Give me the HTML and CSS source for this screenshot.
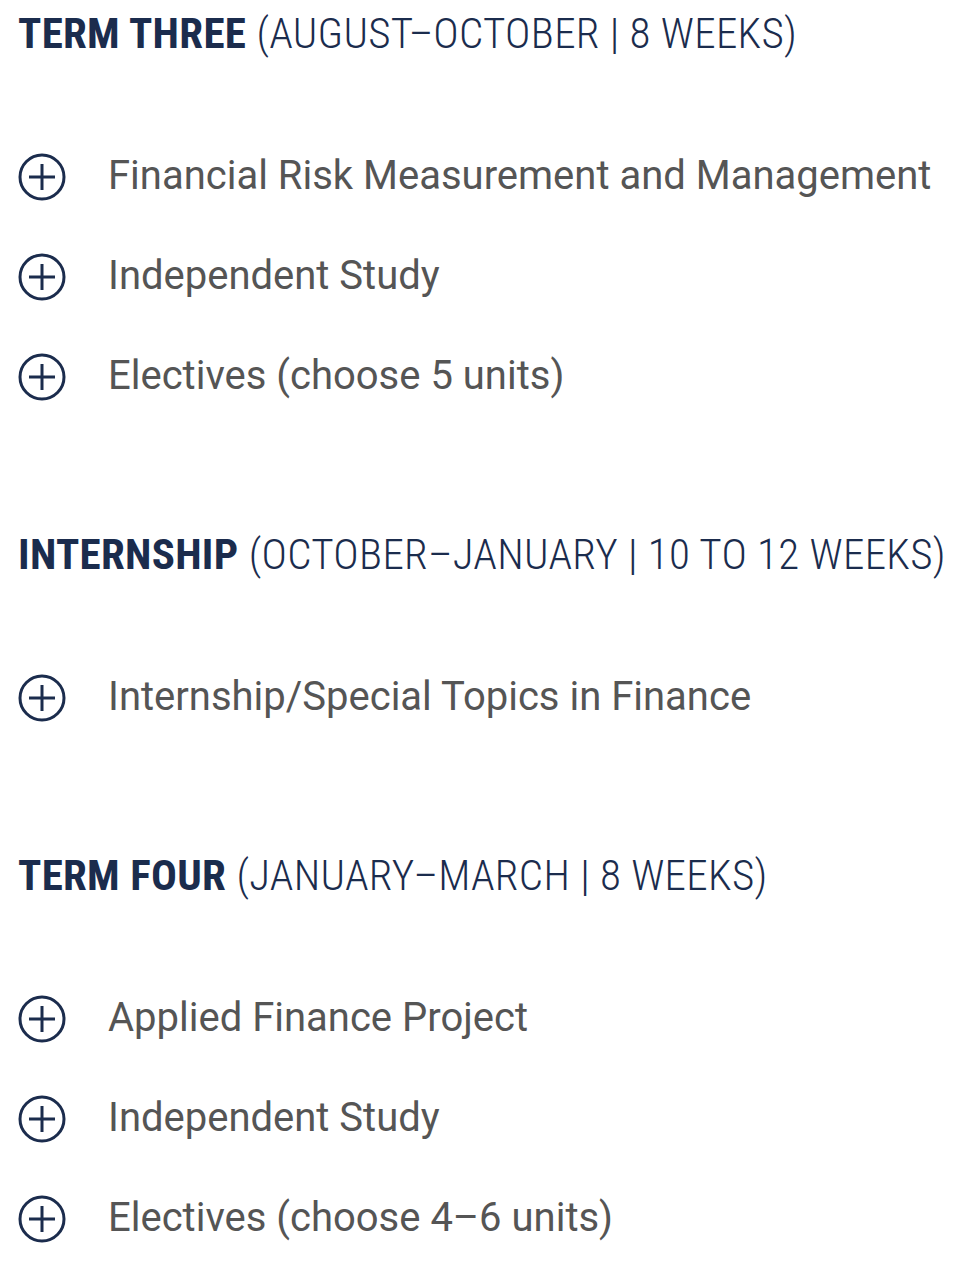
FILE: index.html
```html
<!DOCTYPE html>
<html lang="en">
<head>
<meta charset="utf-8">
<title>Curriculum</title>
<link rel="stylesheet" href="styles.css">
</head>
<body>
<main class="curriculum">
  <section class="term">
    <h2 class="term-title"><strong>TERM THREE</strong> <span class="term-dates">(AUGUST–OCTOBER | 8 WEEKS)</span></h2>
    <ul class="courses">
      <li class="course"><span class="plus"><svg viewBox="0 0 48 48" width="48" height="48"><circle cx="24" cy="24" r="22" fill="none" stroke="#1b2c4d" stroke-width="3"/><path d="M11 24h26M24 11v26" stroke="#1b2c4d" stroke-width="3" fill="none"/></svg></span><span class="course-name">Financial Risk Measurement and Management</span></li>
      <li class="course"><span class="plus"><svg viewBox="0 0 48 48" width="48" height="48"><circle cx="24" cy="24" r="22" fill="none" stroke="#1b2c4d" stroke-width="3"/><path d="M11 24h26M24 11v26" stroke="#1b2c4d" stroke-width="3" fill="none"/></svg></span><span class="course-name">Independent Study</span></li>
      <li class="course"><span class="plus"><svg viewBox="0 0 48 48" width="48" height="48"><circle cx="24" cy="24" r="22" fill="none" stroke="#1b2c4d" stroke-width="3"/><path d="M11 24h26M24 11v26" stroke="#1b2c4d" stroke-width="3" fill="none"/></svg></span><span class="course-name">Electives (choose 5 units)</span></li>
    </ul>
  </section>
  <section class="term">
    <h2 class="term-title"><strong>INTERNSHIP</strong> <span class="term-dates">(OCTOBER–JANUARY | 10 TO 12 WEEKS)</span></h2>
    <ul class="courses">
      <li class="course"><span class="plus"><svg viewBox="0 0 48 48" width="48" height="48"><circle cx="24" cy="24" r="22" fill="none" stroke="#1b2c4d" stroke-width="3"/><path d="M11 24h26M24 11v26" stroke="#1b2c4d" stroke-width="3" fill="none"/></svg></span><span class="course-name">Internship/Special Topics in Finance</span></li>
    </ul>
  </section>
  <section class="term">
    <h2 class="term-title"><strong>TERM FOUR</strong> <span class="term-dates">(JANUARY–MARCH | 8 WEEKS)</span></h2>
    <ul class="courses">
      <li class="course"><span class="plus"><svg viewBox="0 0 48 48" width="48" height="48"><circle cx="24" cy="24" r="22" fill="none" stroke="#1b2c4d" stroke-width="3"/><path d="M11 24h26M24 11v26" stroke="#1b2c4d" stroke-width="3" fill="none"/></svg></span><span class="course-name">Applied Finance Project</span></li>
      <li class="course"><span class="plus"><svg viewBox="0 0 48 48" width="48" height="48"><circle cx="24" cy="24" r="22" fill="none" stroke="#1b2c4d" stroke-width="3"/><path d="M11 24h26M24 11v26" stroke="#1b2c4d" stroke-width="3" fill="none"/></svg></span><span class="course-name">Independent Study</span></li>
      <li class="course"><span class="plus"><svg viewBox="0 0 48 48" width="48" height="48"><circle cx="24" cy="24" r="22" fill="none" stroke="#1b2c4d" stroke-width="3"/><path d="M11 24h26M24 11v26" stroke="#1b2c4d" stroke-width="3" fill="none"/></svg></span><span class="course-name">Electives (choose 4–6 units)</span></li>
    </ul>
  </section>
</main>
</body>
</html>
```
FILE: styles.css
```css
html, body {
  margin: 0;
  padding: 0;
  background: #ffffff;
}
.curriculum {
  padding: 0 0 0 18px;
  display: flex;
  flex-direction: column;
  gap: 96px;
}
.term-title {
  margin: 0;
  height: 66px;
  line-height: 66px;
  font-family: "Roboto Condensed", Roboto, sans-serif;
  font-stretch: condensed;
  font-size: 43px;
  letter-spacing: 0.3px;
  color: #1b2c4d;
  white-space: nowrap;
}
.term-title strong {
  font-weight: 700;
}
.term-dates {
  font-weight: 300;
}
.courses {
  list-style: none;
  margin: 59px 0 0 0;
  padding: 0;
}
.course {
  height: 100px;
  display: flex;
  align-items: center;
  gap: 42px;
}
.plus {
  width: 48px;
  height: 48px;
  display: flex;
  flex: none;
  margin-top: 4px;
}
.course-name {
  font-family: Roboto, sans-serif;
  font-size: 40px;
  color: #555555;
}
```
